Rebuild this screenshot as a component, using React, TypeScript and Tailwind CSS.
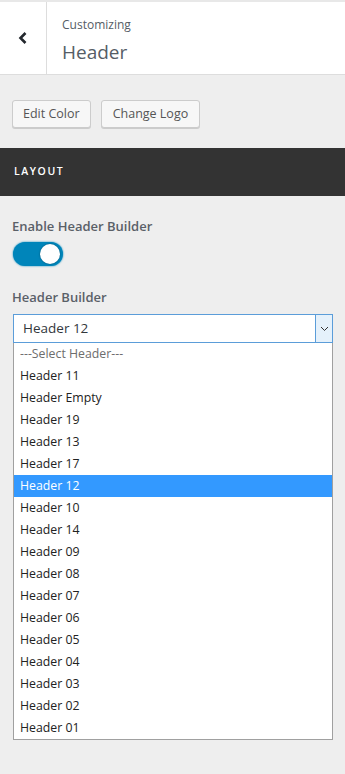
import React, { useState } from "react";

const options = [
  "---Select Header---",
  "Header 11",
  "Header Empty",
  "Header 19",
  "Header 13",
  "Header 17",
  "Header 12",
  "Header 10",
  "Header 14",
  "Header 09",
  "Header 08",
  "Header 07",
  "Header 06",
  "Header 05",
  "Header 04",
  "Header 03",
  "Header 02",
  "Header 01",
];

const App: React.FC = () => {
  const [enabled, setEnabled] = useState<boolean>(true);
  const [selected, setSelected] = useState<string>("Header 12");

  return (
    <div
      className="min-h-screen bg-[#eeeeee] text-[#555d66]"
      style={{ fontFamily: '"Open Sans", "Noto Sans", sans-serif' }}
    >
      <header className="flex h-[75px] border-t-2 border-b border-t-[#e8e8e8] border-b-[#dddddd] bg-white">
        <button className="flex w-[47px] items-center justify-center border-r border-[#dddddd] text-[#23282d]">
          <svg width="12" height="14" viewBox="0 0 12 14" fill="none">
            <path d="M8.5 2 L3.5 7 L8.5 12" stroke="currentColor" strokeWidth="2.6" />
          </svg>
        </button>
        <div className="flex flex-col pt-[15px] pl-[15px]">
          <span className="text-[12px] leading-4 text-[#555d66]">Customizing</span>
          <span className="mt-[7px] text-[19px] leading-6 text-[#555d66]">Header</span>
        </div>
      </header>

      <div className="flex gap-[10px] px-[12px] pt-[25px] pb-[20px]">
        <button className="h-[28px] rounded-[3px] border border-[#cccccc] bg-[#f7f7f7] px-[10px] text-[12.5px] text-[#555555] shadow-[0_1px_0_#cccccc]">
          Edit Color
        </button>
        <button className="h-[28px] rounded-[3px] border border-[#cccccc] bg-[#f7f7f7] px-[11px] text-[12.5px] text-[#555555] shadow-[0_1px_0_#cccccc]">
          Change Logo
        </button>
      </div>

      <div className="flex h-[48px] items-center bg-[#333333] px-[14px] text-[10.5px] font-semibold tracking-[0.15em] text-white">
        LAYOUT
      </div>

      <div className="px-[12px] pt-[20px]">
        <div className="text-[13px] font-semibold leading-5 text-[#5a6068]">Enable Header Builder</div>
        <button
          onClick={() => setEnabled(!enabled)}
          className="mt-[6px] ml-px flex h-[24px] w-[50px] items-center rounded-full bg-[#0085ba] px-[3px] shadow-[0_0_2px_#0085ba]"
        >
          <span className="ml-auto h-[20px] w-[20px] rounded-full bg-white shadow-[0_0_2px_rgba(0,0,0,0.4)]" />
        </button>

        <div className="mt-[21px] text-[13px] font-semibold leading-5 text-[#5a6068]">Header Builder</div>
        <div className="mt-[7px] ml-px">
          <div className="flex h-[29px] items-center border border-[#5b9dd9] bg-white pl-[9px] text-[13.5px] text-[#32373c]">
            <span className="flex-1">{selected}</span>
            <span className="flex h-full w-[17px] items-center justify-center border-l border-[#5b9dd9] bg-[#e5f1fb]">
              <svg width="9" height="6" viewBox="0 0 9 6" fill="none">
                <path d="M1 1 L4.5 4.5 L8 1" stroke="#333" strokeWidth="1" />
              </svg>
            </span>
          </div>
          <ul className="border border-t-0 border-[#a0a0a0] bg-white text-[12.3px]">
            {options.map((o, i) => (
              <li
                key={o}
                onClick={() => setSelected(o)}
                className={
                  o === selected
                    ? "flex h-[22px] items-center bg-[#3399ff] pl-[6px] text-white"
                    : i === 0
                    ? "flex h-[22px] items-center pl-[6px] text-[#6d6d6d]"
                    : "flex h-[22px] items-center pl-[6px] text-[#222222]"
                }
              >
                {o}
              </li>
            ))}
          </ul>
        </div>
      </div>
    </div>
  );
};

export default App;
